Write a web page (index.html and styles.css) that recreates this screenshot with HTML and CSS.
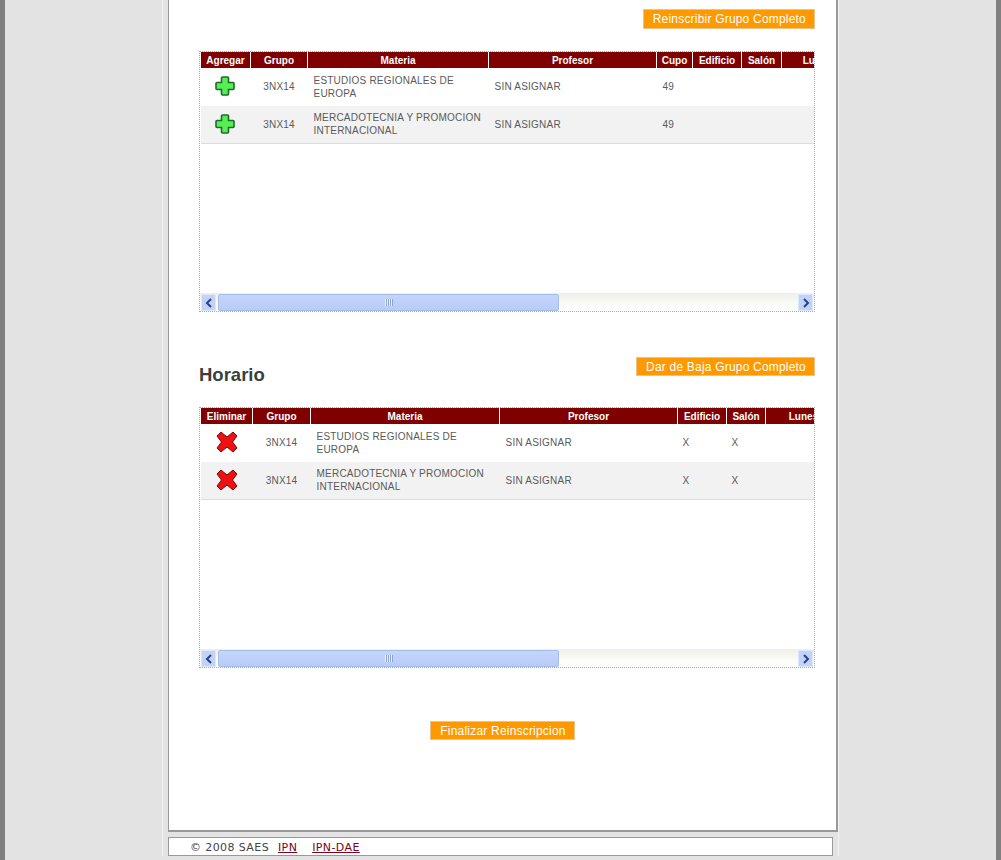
FILE: index.html
```html
<!DOCTYPE html>
<html lang="es">
  <head>
    <meta charset="UTF-8" />
    <title>Reinscripcion</title>
    <link rel="stylesheet" href="styles.css">
  </head>
  <body>
    <div class="shell">
      <div class="main">
        <div class="content">
          <div class="button-row">
            <a class="btn btn-tall">Reinscribir Grupo Completo</a>
          </div>
          <div class="panel panel-first">
            <div class="grid-wrap">
              <table class="grid grid-add">
                <thead>
                  <tr>
                    <th class="c-action">Agregar</th>
                    <th class="c-group">Grupo</th>
                    <th class="c-subject">Materia</th>
                    <th class="c-teacher">Profesor</th>
                    <th class="c-seats">Cupo</th>
                    <th class="c-building">Edificio</th>
                    <th class="c-room">Salón</th>
                    <th class="c-day">Lunes</th>
                  </tr>
                </thead>
                <tbody>
                  <tr>
                    <td class="center action"><svg class="icon" viewBox="0 0 20 20"><path class="plus" d="M7.500 1h5a1 1 0 0 1 1 1v4.500H18a1 1 0 0 1 1 1v5a1 1 0 0 1-1 1h-4.500V18a1 1 0 0 1-1 1h-5a1 1 0 0 1-1-1v-4.500H2a1 1 0 0 1-1-1v-5a1 1 0 0 1 1-1h4.500V2a1 1 0 0 1 1-1z"/></svg></td>
                    <td class="center">3NX14</td>
                    <td>ESTUDIOS REGIONALES DE EUROPA</td>
                    <td>SIN ASIGNAR</td>
                    <td>49</td>
                    <td></td>
                    <td></td>
                    <td></td>
                  </tr>
                  <tr class="alt">
                    <td class="center action"><svg class="icon" viewBox="0 0 20 20"><path class="plus" d="M7.500 1h5a1 1 0 0 1 1 1v4.500H18a1 1 0 0 1 1 1v5a1 1 0 0 1-1 1h-4.500V18a1 1 0 0 1-1 1h-5a1 1 0 0 1-1-1v-4.500H2a1 1 0 0 1-1-1v-5a1 1 0 0 1 1-1h4.500V2a1 1 0 0 1 1-1z"/></svg></td>
                    <td class="center">3NX14</td>
                    <td class="subject">MERCADOTECNIA Y PROMOCION INTERNACIONAL</td>
                    <td>SIN ASIGNAR</td>
                    <td>49</td>
                    <td></td>
                    <td></td>
                    <td></td>
                  </tr>
                </tbody>
              </table>
            </div>
            <div class="scrollbar">
              <span class="arrow"><svg viewBox="0 0 10 10"><path d="M7 1L3 5l4 4" /></svg></span>
              <span class="thumb"><i></i></span>
              <span class="arrow arrow-right"><svg viewBox="0 0 10 10"><path d="M3 1l4 4-4 4" /></svg></span>
            </div>
          </div>

          <div class="title-row">
            <h2>Horario</h2>
            <a class="btn">Dar de Baja Grupo Completo</a>
          </div>
          <div class="panel">
            <div class="grid-wrap">
              <table class="grid grid-drop">
                <thead>
                  <tr>
                    <th class="c-action">Eliminar</th>
                    <th class="c-group">Grupo</th>
                    <th class="c-subject">Materia</th>
                    <th class="c-teacher">Profesor</th>
                    <th class="c-building">Edificio</th>
                    <th class="c-room">Salón</th>
                    <th class="c-day">Lunes</th>
                  </tr>
                </thead>
                <tbody>
                  <tr>
                    <td class="center"><svg class="icon icon-x" viewBox="0 0 22 22"><path class="cross" d="M5 1l6 5 6-5 4 4-4.500 6 4.500 6-4 4-6-5-6 5-4-4 4.500-6L1 5z"/></svg></td>
                    <td class="center">3NX14</td>
                    <td>ESTUDIOS REGIONALES DE EUROPA</td>
                    <td>SIN ASIGNAR</td>
                    <td class="mark">X</td>
                    <td class="mark">X</td>
                    <td></td>
                  </tr>
                  <tr class="alt">
                    <td class="center"><svg class="icon icon-x" viewBox="0 0 22 22"><path class="cross" d="M5 1l6 5 6-5 4 4-4.500 6 4.500 6-4 4-6-5-6 5-4-4 4.500-6L1 5z"/></svg></td>
                    <td class="center">3NX14</td>
                    <td class="subject">MERCADOTECNIA Y PROMOCION INTERNACIONAL</td>
                    <td>SIN ASIGNAR</td>
                    <td class="mark">X</td>
                    <td class="mark">X</td>
                    <td></td>
                  </tr>
                </tbody>
              </table>
            </div>
            <div class="scrollbar">
              <span class="arrow"><svg viewBox="0 0 10 10"><path d="M7 1L3 5l4 4" /></svg></span>
              <span class="thumb"><i></i></span>
              <span class="arrow arrow-right"><svg viewBox="0 0 10 10"><path d="M3 1l4 4-4 4" /></svg></span>
            </div>
          </div>
        </div>
        <div class="finish">
          <a class="btn">Finalizar Reinscripcion</a>
        </div>
      </div>
      <footer>
        <span>© 2008 SAES</span>
        <a href="#ipn">IPN</a>
        <a href="#dae">IPN-DAE</a>
      </footer>
    </div>
  </body>
</html>
```

FILE: styles.css
```css
html {
  height: 100%;
}
body {
  margin: 0;
  height: 860px;
  overflow: hidden;
  box-sizing: border-box;
  background: #e3e3e3;
  border-left: 5px solid #808080;
  border-right: 5px solid #808080;
  font-family: "Liberation Sans", Arial, sans-serif;
}
.shell {
  box-sizing: border-box;
  width: 677px;
  height: 856px;
  margin-left: 157px;
  padding-left: 5px;
  border-left: 1px solid #f4f4f4;
  border-right: 1px solid #f4f4f4;
}
.main {
  box-sizing: border-box;
  width: 670px;
  height: 832px;
  background: #fff;
  border-left: 1px solid #999;
  border-right: 2px solid #999;
  border-bottom: 2px solid #999;
}
.content {
  width: 616px;
  margin-left: 30px;
  padding-top: 9px;
}
.button-row {
  display: flex;
  justify-content: flex-end;
}
.btn {
  display: block;
  box-sizing: border-box;
  height: 19px;
  padding: 0 8px 0 9px;
  background: #ff9900;
  border: 1px solid #e8c48a;
  color: #fff;
  font-size: 12px;
  letter-spacing: 0.2px;
  line-height: 18px;
}
.btn-tall {
  height: 20px;
}
.panel {
  box-sizing: border-box;
  height: 261px;
  display: flex;
  flex-direction: column;
  border: 1px dotted #aaa;
}
.panel-first {
  margin-top: 22px;
}
.grid-wrap {
  flex: 1;
  overflow: hidden;
}
.grid {
  border-collapse: collapse;
  table-layout: fixed;
  color: #5a5a5a;
  font-size: 10px;
  line-height: 13px;
}
.grid th {
  height: 15px;
  padding: 1px 0 0;
  background: #800000;
  border-left: 1px solid #fff;
  color: #fff;
  font-size: 10px;
  font-weight: bold;
  line-height: 15px;
  text-align: center;
}
.grid td {
  height: 38px;
  padding: 0 5px 0 6px;
  letter-spacing: 0.22px;
  vertical-align: middle;
}
.grid tbody tr:first-child td {
  height: 37px;
  padding-bottom: 1px;
}
.grid tr.alt td {
  height: 37px;
  background: #f2f2f2;
  border-bottom: 1px solid #ddd;
}
.grid tr.alt td.subject {
  height: 35px;
  padding-bottom: 2px;
}
.grid td.center {
  padding: 0;
  text-align: center;
}
.grid td.action {
  padding-right: 2px;
}
.grid td.mark {
  padding-left: 5px;
}
.grid-add {
  width: 645px;
}
.grid-add .c-action { width: 49px; }
.grid-add .c-group { width: 56px; }
.grid-add .c-subject { width: 180px; }
.grid-add .c-teacher { width: 167px; }
.grid-add .c-seats { width: 35px; }
.grid-add .c-building { width: 48px; }
.grid-add .c-room { width: 39px; }
.grid-add .c-day { width: 71px; }
.grid-drop {
  width: 634px;
}
.grid-drop .c-action { width: 51px; }
.grid-drop .c-group { width: 57px; }
.grid-drop .c-subject { width: 188px; }
.grid-drop .c-teacher { width: 177px; }
.grid-drop .c-building { width: 48px; }
.grid-drop .c-room { width: 38px; }
.grid-drop .c-day { width: 75px; }
.icon {
  display: block;
  width: 20px;
  height: 20px;
  margin: -2px auto 0;
}
.icon-x {
  width: 22px;
  height: 22px;
}
.plus {
  fill: #55ee55;
  stroke: #1f6b2a;
  stroke-width: 1.6;
}
.cross {
  fill: #ee1111;
  stroke: #7a0808;
  stroke-width: 1;
  stroke-linejoin: round;
}
.scrollbar {
  display: flex;
  align-items: stretch;
  gap: 2px;
  height: 18px;
  padding: 1px 1px 0 1px;
  box-sizing: border-box;
  background: linear-gradient(#efefe8, #fbfbf8 60%, #fff);
}
.arrow {
  box-sizing: border-box;
  width: 15px;
  background: #c3d3f7;
  border: 1px solid #dfe8fb;
  display: flex;
  align-items: center;
  justify-content: center;
}
.arrow svg {
  width: 10px;
  height: 10px;
  fill: none;
  stroke: #2b3f8c;
  stroke-width: 2;
}
.arrow-right {
  margin-left: auto;
}
.thumb {
  box-sizing: border-box;
  width: 341px;
  background: linear-gradient(#c4d5fb, #b7ccf8);
  border: 1px solid #a5bdea;
  border-radius: 2px;
  display: flex;
  align-items: center;
  justify-content: center;
}
.thumb i {
  width: 8px;
  height: 7px;
  background: repeating-linear-gradient(90deg, #e9f0fe 0 1px, #8aa3d8 1px 2px);
}
.title-row {
  display: flex;
  justify-content: space-between;
  height: 28px;
  margin-top: 45px;
  margin-bottom: 22px;
}
.title-row h2 {
  margin: 8px 0 0;
  color: #3a3f3f;
  font-size: 18.5px;
  line-height: 20px;
  font-weight: bold;
}
.finish {
  display: flex;
  justify-content: center;
  margin-top: 53px;
}
footer {
  box-sizing: border-box;
  width: 665px;
  height: 19px;
  margin-top: 5px;
  padding-left: 21px;
  background: #fff;
  border: 1px solid #999;
  color: #444;
  font-family: "DejaVu Sans", Verdana, sans-serif;
  font-size: 11px;
  letter-spacing: 0.4px;
  line-height: 19px;
}
footer a {
  color: #800020;
  margin-left: 5px;
}
footer a + a {
  margin-left: 11px;
}
```
